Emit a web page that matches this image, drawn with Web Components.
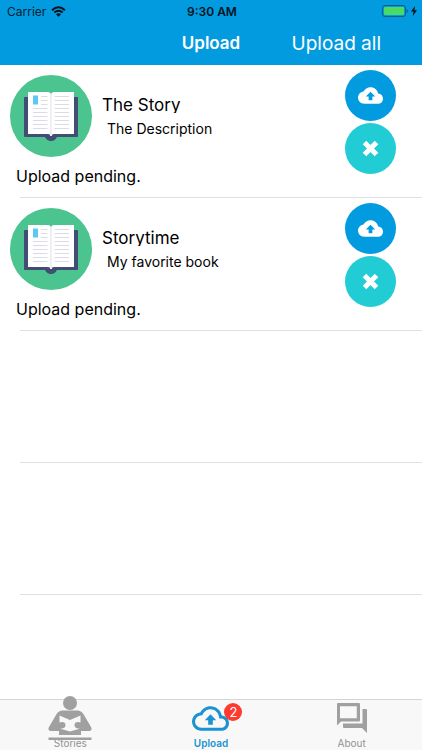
<!DOCTYPE html>
<html lang="en">
<head>
<meta charset="utf-8">
<meta name="viewport" content="width=device-width, initial-scale=1">
<title>Upload</title>
<style>
  body {
    margin: 0;
    font-family: Inter, "Liberation Sans", sans-serif;
    color: #000;
    background: #fff;
  }
</style>
</head>
<body>
<upload-app></upload-app>

<script>
const define = (name, html, setup) => {
    const template = document.createElement('template');
    template.innerHTML = html;

    customElements.define(name, class extends HTMLElement {
        constructor () {
            super();
            this.attachShadow({mode: 'open'});
            this.shadowRoot.appendChild(template.content.cloneNode(true));
            if (setup) setup(this, this.shadowRoot);
        }
    });
};

define('status-bar', `
    <style>
      :host {
        display: grid;
        grid-template-columns: 1fr auto 1fr;
        align-items: center;
        height: 20px;
        padding: 1px 5px 0 7px;
        font-size: 12px;
        color: #06202e;
      }
      .left, .right {
        display: flex;
        align-items: center;
        gap: 5px;
      }
      .right {
        justify-content: flex-end;
        gap: 3px;
      }
      .time {
        font-weight: 600;
        color: #04141d;
      }
      svg { display: block; }
    </style>
    <div class="left">
      <span>Carrier</span>
      <svg width="15" height="11" viewBox="0 0 15 11" fill="none" stroke="#04141d" stroke-width="2">
        <path d="M1 4.2Q7.5-1.6 14 4.2M3.3 6.6Q7.5 2.9 11.7 6.600"/>
        <path d="M7.5 10.8L5 8.2Q7.5 6.2 10 8.2Z" fill="#04141d" stroke="none"/>
      </svg>
    </div>
    <span class="time">9:30 AM</span>
    <div class="right">
      <svg width="26" height="12" viewBox="0 0 26 12">
        <rect x=".5" y=".5" width="23" height="11" rx="2.5" fill="none" stroke="#075f87"/>
        <rect x="2" y="2" width="20" height="8" rx="1" fill="#4cd964"/>
        <path d="M24.6 4v4q1.4-.7 1.4-2t-1.4-2z" fill="#075f87"/>
      </svg>
      <svg width="6" height="10" viewBox="0 0 6 10"><path d="M4 0L0 5.6h2.5L1.8 10 6 4.2H3.4z" fill="#04141d"/></svg>
    </div>
`);

define('nav-bar', `
    <style>
      :host {
        display: grid;
        grid-template-columns: 1fr auto 1fr;
        align-items: center;
        height: 44px;
        padding: 0 41px;
        color: #fff;
      }
      h1 {
        grid-column: 2;
        margin: 0;
        font-size: 17px;
        font-weight: 600;
      }
      .action { justify-self: end; }
    </style>
    <h1><slot></slot></h1>
    <div class="action"><slot name="action"></slot></div>
`);

define('round-button', `
    <style>
      :host { display: block; }
      button {
        display: grid;
        place-items: center;
        width: 51px;
        height: 51px;
        padding: 0;
        border: 0;
        border-radius: 50%;
        background: var(--button-color, #039be0);
        color: #fff;
      }
    </style>
    <button type="button"><slot></slot></button>
`, (el, root) => {
    root.querySelector('button').setAttribute('aria-label', el.getAttribute('label') || '');
});

define('book-icon', `
    <style>
      :host { display: block; }
      svg { display: block; }
    </style>
    <svg width="82" height="82" viewBox="0 0 82 82" aria-hidden="true">
      <circle cx="41" cy="41" r="41" fill="#4bc490"/>
      <path d="M15 22h52q1 0 1 1v38q0 1-1 1H47q-2 4-6 4t-6-4H15q-1 0-1-1V23q0-1 1-1z" fill="#434c72"/>
      <path d="M18 17h20q2 0 3 2 1-2 3-2h20v42H44q-2 0-3 2-1-2-3-2H18z" fill="#fff"/>
      <path d="M41 19v42" stroke="#eeeef4" stroke-width="2"/>
      <path d="M31 21.5h6.500M31 25.500h6.500M31 29.500h6.500M23 33.500h14.500M23 37.500h14.500M23 41.500h14.500M23 45.500h14.500M23 49.500h14.500M23 53.500h14.500M44.500 21.500H59M44.500 25.500H59M44.500 29.500H59M44.500 33.500H59M44.500 37.500H59M44.500 41.500H59M44.500 45.500H59M44.500 49.500H59M44.500 53.500H59" stroke="#dcdce8"/>
      <path d="M23 20.500h5v9h-5z" fill="#5dc8f4"/>
    </svg>
`);

define('story-row', `
    <style>
      :host { display: block; }
      .row {
        display: flex;
        padding: 5px 26px 0 10px;
      }
      .main { flex: 1; }
      .top {
        display: flex;
        gap: 10px;
        padding-top: 5px;
      }
      .text { padding-top: 18px; }
      h2 {
        margin: 0;
        height: 20px;
        overflow: hidden;
        font-size: 17px;
        font-weight: 400;
        line-height: 24px;
      }
      p { margin: 0; }
      .description {
        padding: 7px 0 0 5px;
        font-size: 14px;
        line-height: 18px;
      }
      .status {
        padding: 7px 0 0 6px;
        font-size: 16px;
        line-height: 24px;
      }
      .actions {
        display: grid;
        gap: 2px;
        align-content: start;
      }
      svg { display: block; }
    </style>
    <div class="row">
      <div class="main">
        <div class="top">
          <book-icon></book-icon>
          <div class="text">
            <h2><slot name="title"></slot></h2>
            <p class="description"><slot name="description"></slot></p>
          </div>
        </div>
        <p class="status"><slot name="status"></slot></p>
      </div>
      <div class="actions">
        <round-button label="Upload">
          <svg width="25" height="25" viewBox="0 0 24 24" fill="currentColor"><path fill-rule="evenodd" d="M19.35 10.04C18.67 6.59 15.64 4 12 4 9.11 4 6.6 5.64 5.35 8.04 2.34 8.36 0 10.91 0 14c0 3.31 2.69 6 6 6h13c2.76 0 5-2.24 5-5 0-2.64-2.05-4.78-4.65-4.96zM12 8.500l4.500 4.500h-2.700v3.500h-3.600V13H7.500z"/></svg>
        </round-button>
        <round-button label="Remove" style="--button-color: #22ccd4">
          <svg width="17" height="17" viewBox="0 0 17 17" stroke="currentColor" stroke-width="5"><path d="M2.500 2.500l12 12M14.500 2.500l-12 12"/></svg>
        </round-button>
      </div>
    </div>
`);

define('story-list', `
    <style>
      :host {
        display: block;
        flex: 1;
      }
      ::slotted(*) {
        display: block;
        height: 132px;
        background: linear-gradient(#e0e0e2, #e0e0e2) 20px 100% / 100% 1px no-repeat;
      }
      ::slotted(story-row) { height: 133px; }
    </style>
    <slot></slot>
`);

define('tab-item', `
    <style>
      :host {
        display: block;
        color: #929292;
      }
      :host([active]) {
        color: #1a93d0;
        font-weight: 600;
      }
      a {
        display: grid;
        justify-items: center;
        align-content: end;
        height: 50px;
        color: inherit;
        font-size: 10px;
        line-height: 14px;
        text-decoration: none;
      }
      .icon {
        position: relative;
        display: grid;
        grid-template-rows: 100%;
        align-items: center;
        justify-items: center;
        height: 38px;
        margin-bottom: -1px;
      }
      .badge {
        position: absolute;
        top: 4px;
        left: 32px;
        width: 18px;
        border-radius: 9px;
        background: #fe3b30;
        color: #fff;
        font-size: 13px;
        font-weight: 400;
        line-height: 18px;
        text-align: center;
      }
    </style>
    <a href="#">
      <span class="icon"><slot name="icon"></slot><span class="badge"></span></span>
      <span><slot></slot></span>
    </a>
`, (el, root) => {
    const badge = root.querySelector('.badge');
    const count = el.getAttribute('badge');
    if (count) badge.textContent = count;
    else badge.remove();
    if (el.hasAttribute('active')) root.querySelector('a').setAttribute('aria-current', 'page');
});

define('tab-bar', `
    <style>
      :host {
        display: grid;
        grid-template-columns: repeat(3, 1fr);
        border-top: 1px solid #d4d4d4;
        background: #f8f8f8;
      }
    </style>
    <slot></slot>
`);

define('upload-app', `
    <style>
      :host {
        display: flex;
        flex-direction: column;
        min-height: 100vh;
      }
      header { background: #039be0; }
      .upload-all {
        padding: 0;
        border: 0;
        background: none;
        color: #fff;
        font: inherit;
        font-size: 19px;
      }
      svg { display: block; }
    </style>
    <header>
      <status-bar></status-bar>
      <nav-bar>Upload<button class="upload-all" slot="action" type="button">Upload all</button></nav-bar>
    </header>
    <story-list>
      <story-row>
        <span slot="title">The Story</span>
        <span slot="description">The Description</span>
        <span slot="status">Upload pending.</span>
      </story-row>
      <story-row>
        <span slot="title">Storytime</span>
        <span slot="description">My favorite book</span>
        <span slot="status">Upload pending.</span>
      </story-row>
      <div></div>
      <div></div>
    </story-list>
    <tab-bar>
      <tab-item>
        <svg slot="icon" width="44" height="44" viewBox="0 0 44 44" fill="#a0a0a0">
          <circle cx="22" cy="7" r="7"/>
          <path d="M14 14.500Q10 15 8 19L1 31q-2 4 3 4h7v4h22v-4h7q5 0 3-4l-7-12q-2-4-6-4.500z"/>
          <path d="M11.500 19.500L22 24l10.500-4.500V32.500L22 35.500 11.500 32.500z" fill="#f8f8f8"/>
          <path d="M9 27l5-1q3.500 0 3.500 3t-3.500 3.500l-5 1zM35 27l-5-1q-3.500 0-3.500 3t3.500 3.500l5 1z"/>
          <path d="M.5 41.500h43V44H.5z"/>
        </svg>
        Stories
      </tab-item>
      <tab-item active badge="2">
        <svg slot="icon" width="37" height="37" viewBox="0 0 24 24" fill="#1a93d0">
          <path d="M19.35 10.04C18.67 6.59 15.64 4 12 4 9.11 4 6.6 5.64 5.35 8.04 2.34 8.36 0 10.91 0 14c0 3.31 2.69 6 6 6h13c2.76 0 5-2.24 5-5 0-2.64-2.05-4.78-4.65-4.96zM19 18H6c-2.21 0-4-1.79-4-4 0-2.05 1.53-3.76 3.56-3.97l1.07-.11.5-.95C8.08 7.14 9.94 6 12 6c2.62 0 4.88 1.86 5.39 4.43l.3 1.5 1.53.11c1.56.1 2.78 1.41 2.78 2.96 0 1.65-1.35 3-3 3z"/>
          <path d="M12 9.200l3.700 4h-2.200V16h-3v-2.800H8.300z"/>
        </svg>
        Upload
      </tab-item>
      <tab-item>
        <svg slot="icon" width="30" height="30" viewBox="0 0 30 30" fill="#a0a0a0">
          <path fill-rule="evenodd" d="M1 0h21q1 0 1 1v16.500q0 1-1 1H4L0 22.500V1q0-1 1-1zM3 3.200v12h16.800v-12z"/>
          <path d="M25.500 6H29q1 0 1 1v23l-5-5H7q-1 0-1-1v-3.500h19.500z"/>
        </svg>
        About
      </tab-item>
    </tab-bar>
`);
</script>
</body>
</html>
